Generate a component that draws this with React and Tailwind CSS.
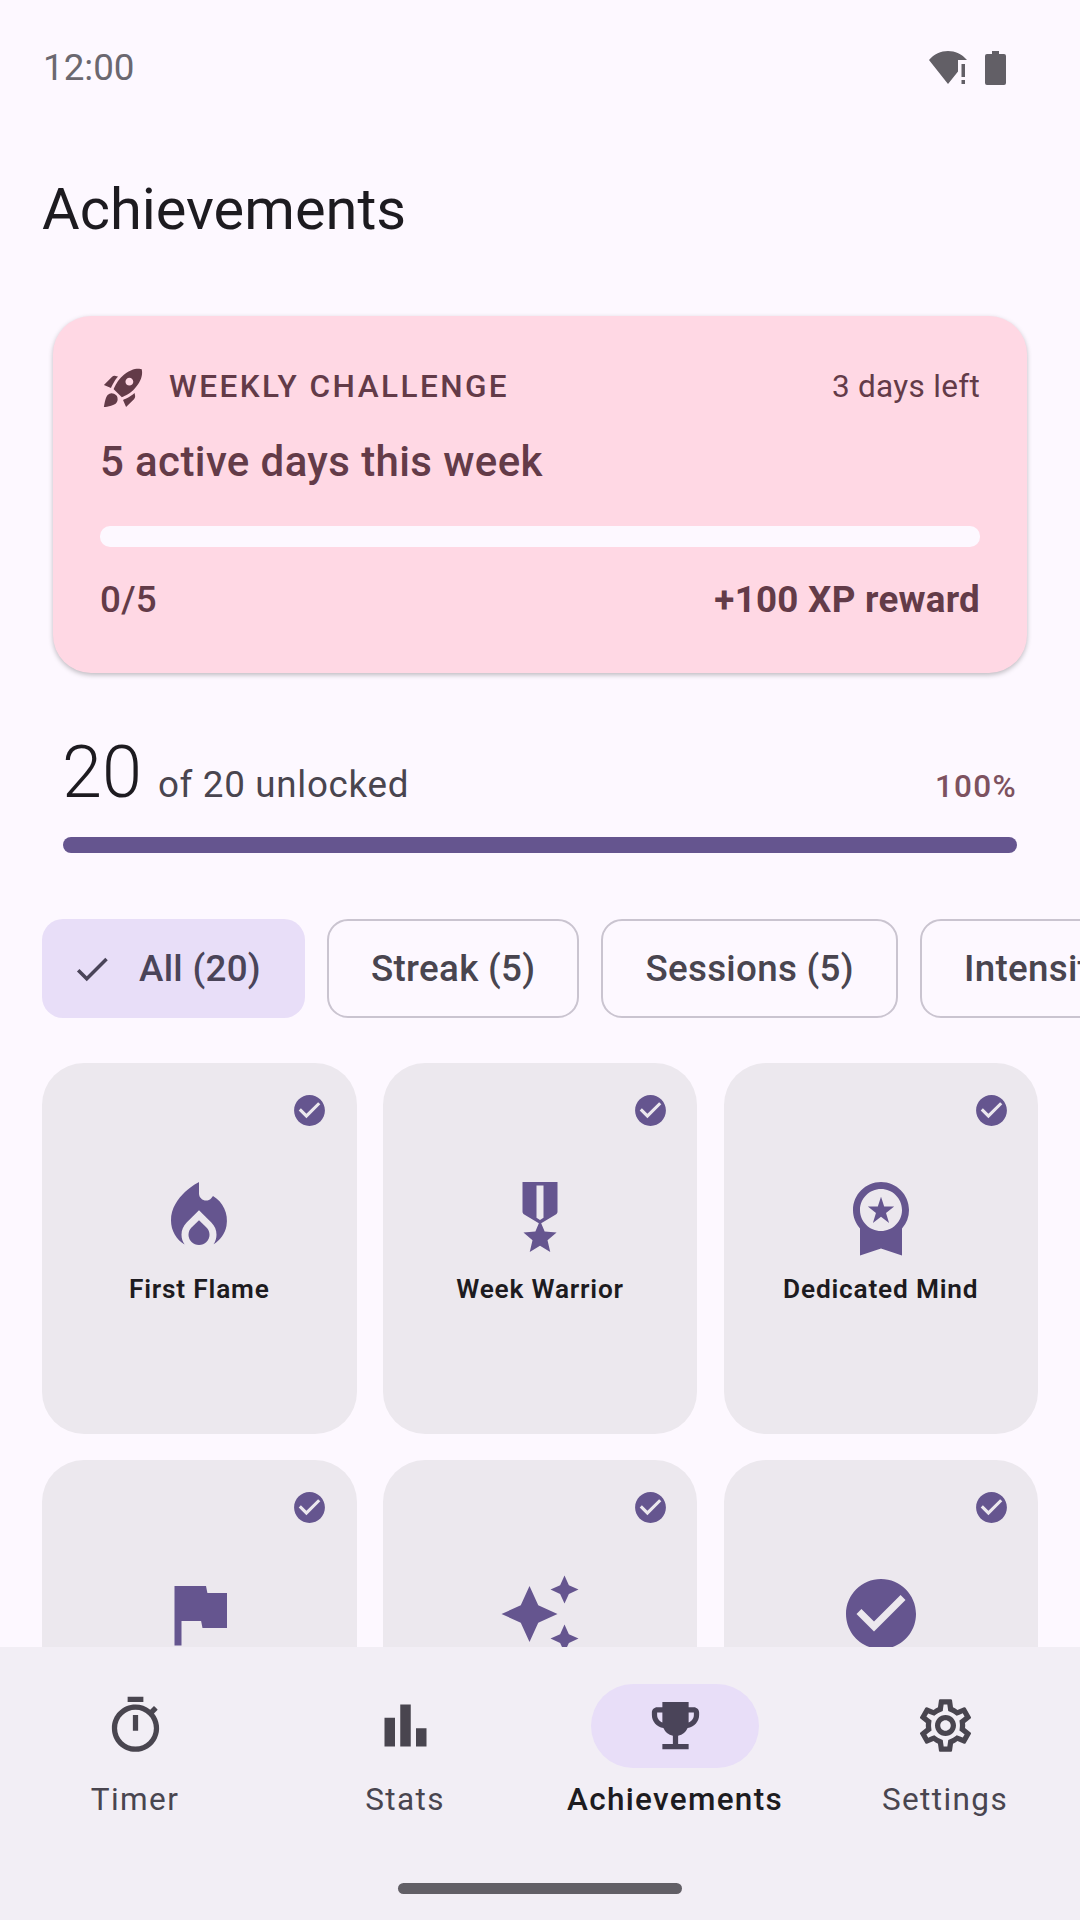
import React from 'react';
import { MdRocketLaunch, MdCheck, MdCheckCircle, MdLocalFireDepartment, MdMilitaryTech, MdWorkspacePremium, MdFlag, MdAutoAwesome, MdOutlineTimer, MdBarChart, MdEmojiEvents, MdOutlineSettings } from 'react-icons/md';

const achievements = [
  { name: 'First Flame', Icon: MdLocalFireDepartment },
  { name: 'Week Warrior', Icon: MdMilitaryTech },
  { name: 'Dedicated Mind', Icon: MdWorkspacePremium },
  { id: 'flag', Icon: MdFlag },
  { id: 'sparkle', Icon: MdAutoAwesome },
  { id: 'done', Icon: MdCheckCircle },
];

const chips = ['Streak (5)', 'Sessions (5)', 'Intensity (5)'];

const nav = [
  { label: 'Timer', Icon: MdOutlineTimer },
  { label: 'Stats', Icon: MdBarChart },
  { label: 'Achievements', Icon: MdEmojiEvents, active: true },
  { label: 'Settings', Icon: MdOutlineSettings },
];

function Wifi() {
  return (
    <svg width="40" height="34" viewBox="0 0 40 34" className="text-[#625f66]">
      <path fill="currentColor" d="M0 9 C5 3 12 0 19 0 C26 0 33 3 38 9 L29 9 L29 20.5 L19 33 Z" />
      <rect x="32.5" y="13" width="3.5" height="13" fill="currentColor" />
      <rect x="32.5" y="29" width="3.5" height="4" fill="currentColor" />
    </svg>
  );
}

function Battery() {
  return (
    <svg width="21" height="34" viewBox="0 0 21 34" className="text-[#625f66]">
      <path fill="currentColor" d="M7 0 H14 V3 H19 Q21 3 21 5 V32 Q21 34 19 34 H2 Q0 34 0 32 V5 Q0 3 2 3 H7 Z" />
    </svg>
  );
}

export default function App() {
  return (
    <div className="w-[1080px] h-[1920px] flex flex-col overflow-hidden bg-[#fdf8ff] font-['Roboto',sans-serif] text-[#1d1b20]">
      <div className="flex-1 min-h-0 overflow-hidden">
        <div className="h-[134px] pt-[46px] pl-[43px] pr-[74px] flex justify-between items-start">
          <span className="text-[36.75px] leading-[44px] text-[#6b6870]">12:00</span>
          <div className="flex items-center gap-[16px] pt-[5px]">
            <Wifi />
            <Battery />
          </div>
        </div>

        <h1 className="h-[74px] pl-[42px] mt-[38px] text-[57.75px] leading-[74px] font-normal">Achievements</h1>

        <section className="mt-[70px] mx-[53px] h-[357px] rounded-[38px] bg-[#ffd8e4] text-[#633b48] px-[47px] pt-[45px] shadow-[0_2px_5px_rgba(0,0,0,0.25)]">
          <div className="flex items-center justify-between h-[52px]">
            <div className="flex items-center">
              <MdRocketLaunch className="w-[47px] h-[47px]" />
              <span className="ml-[22px] text-[31.5px] font-medium tracking-[2.45px] leading-[42px]">WEEKLY CHALLENGE</span>
            </div>
            <span className="text-[31.5px] tracking-[0.3px] leading-[42px] font-normal">3 days left</span>
          </div>
          <div className="mt-[21px] text-[42px] leading-[56px] font-medium tracking-[0.39px]">5 active days this week</div>
          <div className="mt-[36px] h-[21px] rounded-[10px] bg-[#fdf8ff]" />
          <div className="mt-[31px] flex justify-between items-center h-[44px]">
            <span className="text-[36.75px] leading-[44px] font-medium tracking-[0.3px]">0/5</span>
            <span className="text-[36.75px] leading-[44px] font-bold tracking-[0.26px]">+100 XP reward</span>
          </div>
        </section>

        <section className="mt-[58px] mx-[63px]">
          <div className="flex items-baseline justify-between h-[84px]">
            <div className="flex items-baseline">
              <span className="text-[72px] leading-[84px] font-light -ml-[1px]">20</span>
              <span className="ml-[16px] text-[36.75px] tracking-[0.7px] text-[#49454f]">of 20 unlocked</span>
            </div>
            <span className="text-[31.5px] tracking-[1.3px] font-medium text-[#7d5260]">100%</span>
          </div>
          <div className="mt-[22px] h-[16px] rounded-[8px] bg-[#65558f]" />
        </section>

        <div className="mt-[66px] pl-[42px] flex gap-[22px] overflow-hidden">
          <div className="shrink-0 h-[99px] w-[263px] rounded-[21px] bg-[#e8def8] flex items-center pl-[29px] text-[#4a4459]">
            <MdCheck className="w-[42px] h-[42px] shrink-0" />
            <span className="ml-[26px] text-[36.75px] font-medium tracking-[0.3px] whitespace-nowrap">All (20)</span>
          </div>
          {chips.map((c) => (
            <div key={c} className="shrink-0 h-[99px] px-[42px] rounded-[21px] border-[2.6px] border-[#cac4d0] flex items-center text-[#49454f]">
              <span className="text-[36.75px] font-medium tracking-[0.3px] whitespace-nowrap">{c}</span>
            </div>
          ))}
        </div>

        <div className="mt-[45px] px-[42px] grid grid-cols-3 gap-[26.25px]">
          {achievements.map(({ name, id, Icon }) => (
            <div key={name || id} className="relative h-[371px] rounded-[42px] bg-[#ece8ee] pt-[112px] flex flex-col items-center">
              <MdCheckCircle className="absolute top-[29px] right-[28.5px] w-[37px] h-[37px] text-[#65558f]" />
              <Icon className="w-[84px] h-[84px] text-[#65558f]" />
              {name && <span className="mt-[12px] text-[26.25px] leading-[36px] font-semibold tracking-[0.8px]">{name}</span>}
            </div>
          ))}
        </div>
      </div>

      <nav className="shrink-0 h-[273px] bg-[#f2eef5] flex flex-col items-center">
        <div className="w-full grid grid-cols-4 pt-[37px]">
          {nav.map(({ label, Icon, active }) => (
            <div key={label} className="flex flex-col items-center">
              <div className={active ? 'w-[168px] h-[84px] rounded-full bg-[#e8def8] flex items-center justify-center text-[#4a4459]' : 'w-[168px] h-[84px] rounded-full flex items-center justify-center text-[#49454f]'}>
                <Icon className="w-[63px] h-[63px] -mt-[2px]" />
              </div>
              <span className={active ? 'mt-[11px] text-[31.5px] leading-[42px] font-medium tracking-[1.3px] text-[#1d1b20] whitespace-nowrap' : 'mt-[11px] text-[31.5px] leading-[42px] font-normal tracking-[1.4px] text-[#49454f] whitespace-nowrap'}>{label}</span>
            </div>
          ))}
        </div>
        <div className="mt-[62px] w-[284px] h-[11px] rounded-full bg-[#625f66]" />
      </nav>
    </div>
  );
}
